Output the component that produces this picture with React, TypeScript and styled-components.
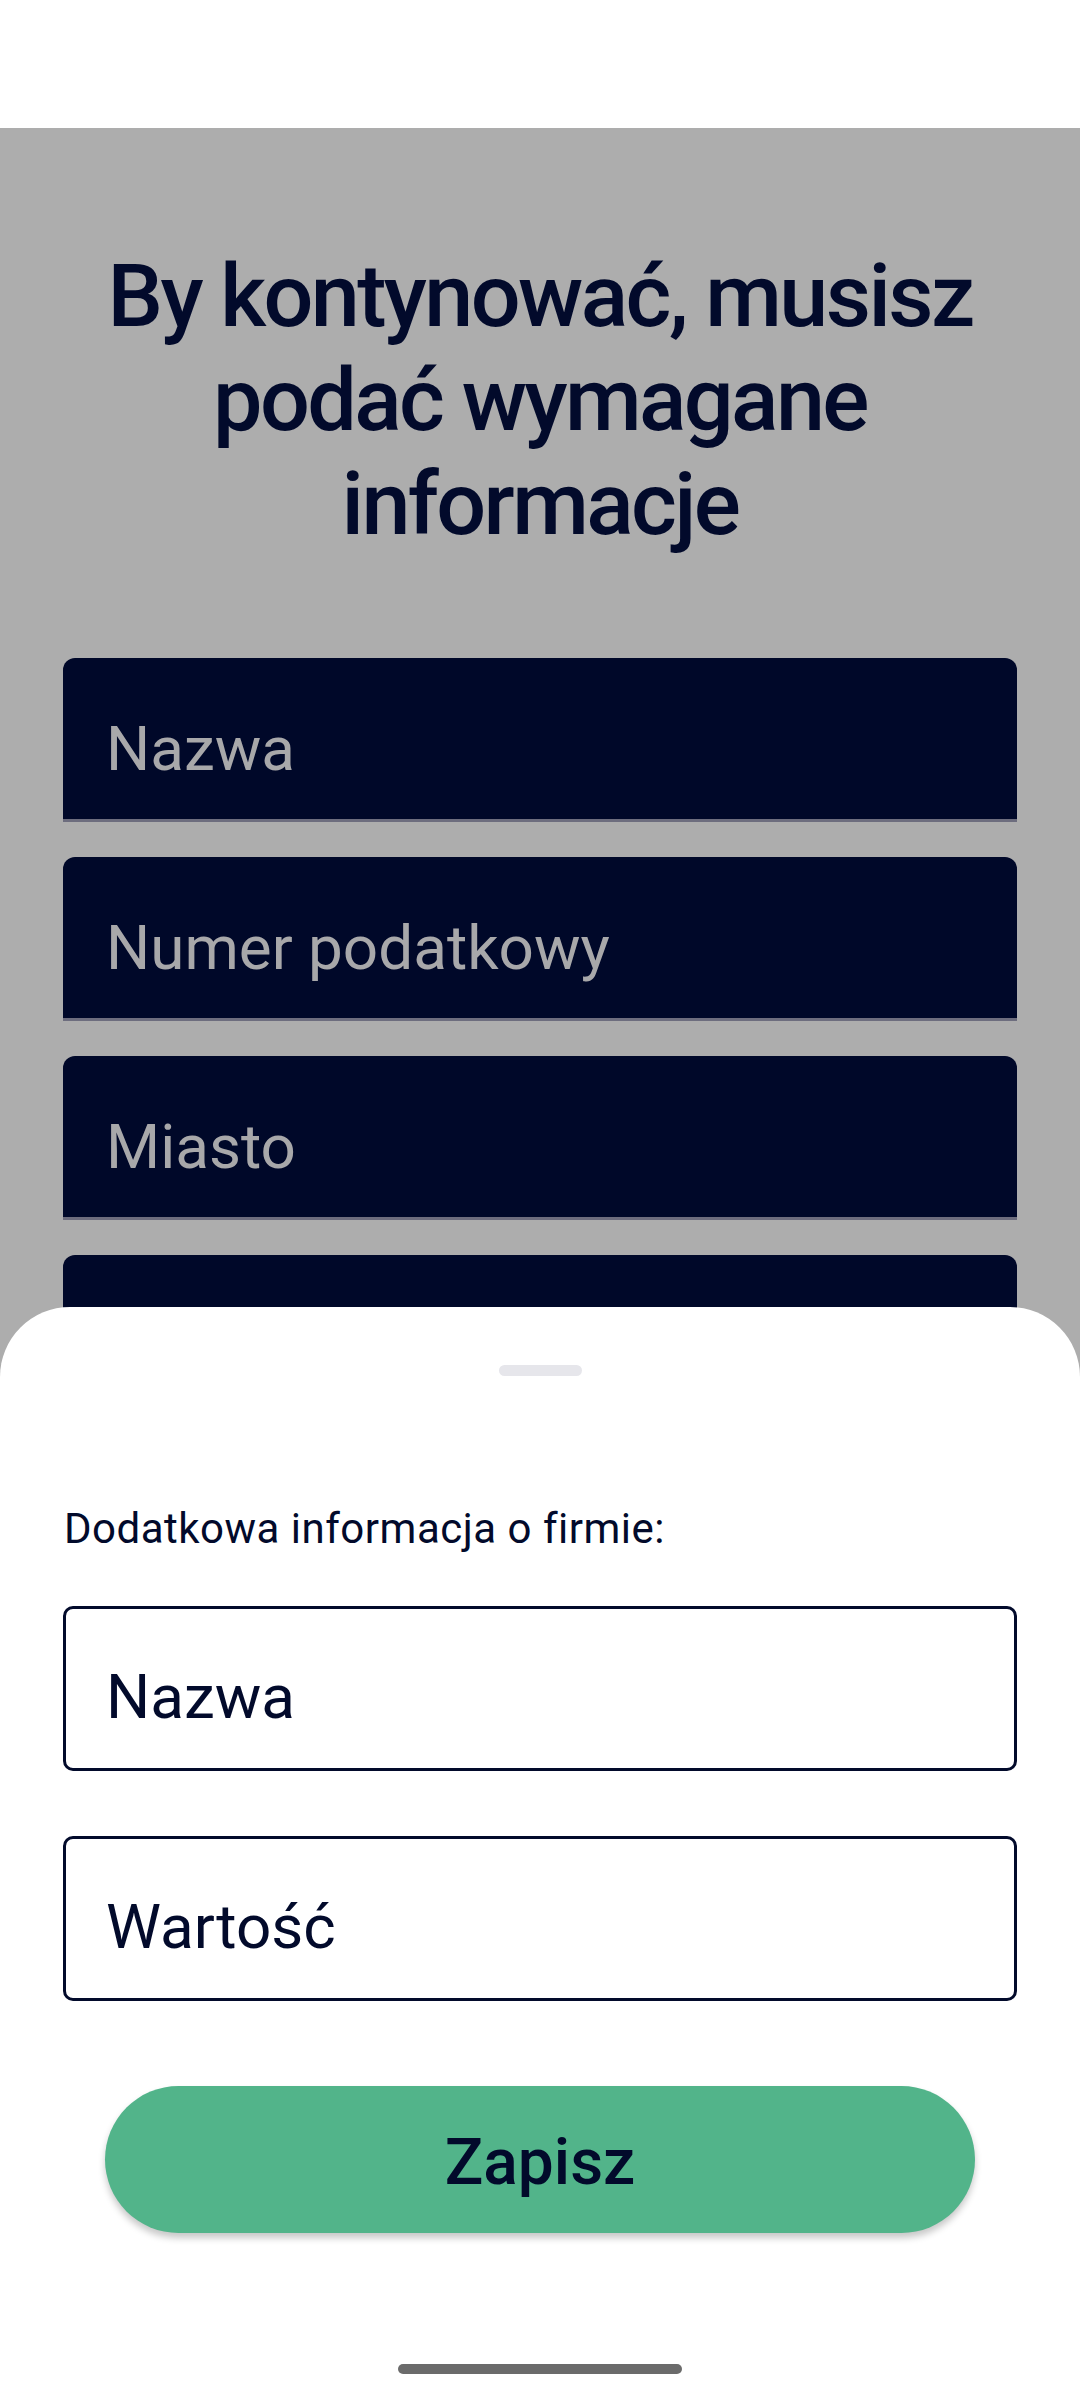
import React from 'react'
import styled, { createGlobalStyle } from 'styled-components'

const GlobalStyle = createGlobalStyle`
  html, body {
    margin: 0;
    padding: 0;
    background: #ffffff;
  }
  * {
    box-sizing: border-box;
  }
`

const navy = '#020a2b'

const Screen = styled.div`
  position: relative;
  width: 1080px;
  height: 2400px;
  overflow: hidden;
  background: #ffffff;
  font-family: Roboto, 'Liberation Sans', sans-serif;
`

const StatusBar = styled.div`
  height: 128px;
  background: #ffffff;
`

const Scrim = styled.main`
  height: 2272px;
  background: #adadad;
  padding: 116px 63px 0;
`

const Title = styled.h1`
  margin: 0 0 102px;
  font-size: 88px;
  line-height: 104px;
  font-weight: 500;
  letter-spacing: -2.6px;
  text-align: center;
  color: ${navy};
`

const FieldList = styled.div`
  display: flex;
  flex-direction: column;
  gap: 35px;
`

const FilledField = styled.div`
  height: 164px;
  padding: 60px 0 0 43px;
  background: #000829;
  border-radius: 12px 12px 0 0;
  border-bottom: 3px solid #6d6d7e;
  font-size: 62px;
  line-height: 62px;
  color: #a8a8aa;
`

const Sheet = styled.section`
  position: absolute;
  left: 0;
  right: 0;
  top: 1307px;
  bottom: 0;
  background: #ffffff;
  border-radius: 70px 70px 0 0;
  padding: 58px 63px 0;
  display: flex;
  flex-direction: column;
`

const Handle = styled.div`
  align-self: center;
  width: 83px;
  height: 11px;
  border-radius: 6px;
  background: #e6e6eb;
`

const Label = styled.p`
  margin: 128px 0 52px 1px;
  font-size: 42px;
  line-height: 50px;
  letter-spacing: 0.5px;
  color: ${navy};
`

const OutlinedField = styled.div<{ $gap?: number }>`
  height: 165px;
  margin-bottom: ${(p) => p.$gap ?? 0}px;
  padding: 57px 0 0 40px;
  border: 3px solid ${navy};
  border-radius: 10px;
  font-size: 62px;
  line-height: 62px;
  color: ${navy};
`

const SaveButton = styled.button`
  align-self: center;
  width: 870px;
  height: 147px;
  margin-top: 20px;
  padding-top: 6px;
  border: none;
  border-radius: 74px;
  background: #52b48a;
  box-shadow: 0 5px 7px rgba(0, 0, 0, 0.22);
  font-family: inherit;
  font-size: 64px;
  font-weight: 500;
  color: ${navy};
`

const HomeIndicator = styled.div`
  align-self: center;
  width: 284px;
  height: 10px;
  margin-top: 131px;
  border-radius: 5px;
  background: #6b6b6b;
`

const requiredFields = ['Nazwa', 'Numer podatkowy', 'Miasto', 'Ulica']

export default function App() {
  return (
    <Screen>
      <GlobalStyle />
      <StatusBar />
      <Scrim>
        <Title>
          By kontynować, musisz
          <br />
          podać wymagane
          <br />
          informacje
        </Title>
        <FieldList>
          {requiredFields.map((f) => (
            <FilledField key={f}>{f}</FilledField>
          ))}
        </FieldList>
      </Scrim>
      <Sheet>
        <Handle />
        <Label>Dodatkowa informacja o firmie:</Label>
        <OutlinedField $gap={65}>Nazwa</OutlinedField>
        <OutlinedField $gap={65}>Wartość</OutlinedField>
        <SaveButton>Zapisz</SaveButton>
        <HomeIndicator />
      </Sheet>
    </Screen>
  )
}
